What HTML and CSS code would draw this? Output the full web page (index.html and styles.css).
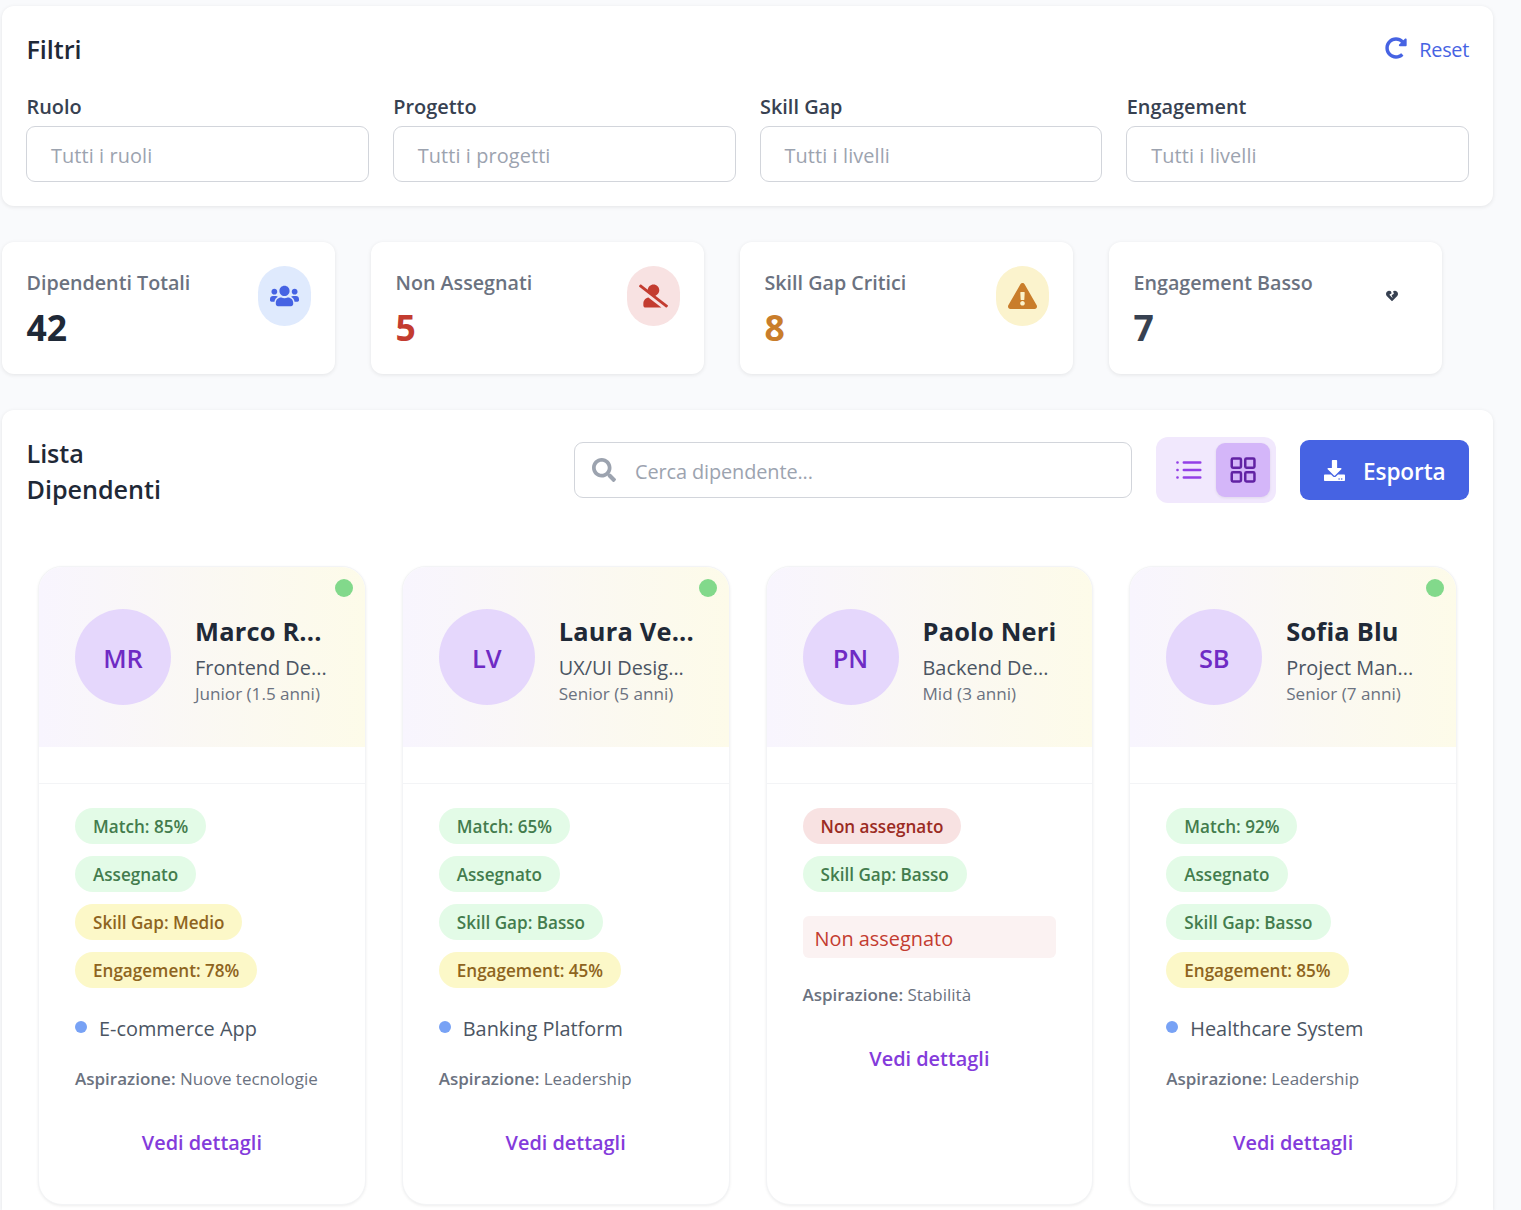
FILE: index.html
```html
<!DOCTYPE html>
<html lang="it">
<head>
<meta charset="utf-8">
<title>Dipendenti</title>
<link rel="stylesheet" href="styles.css">
</head>
<body>
<main class="page">
  <section class="panel filters">
    <div class="filters-head">
      <h2 class="title">Filtri</h2>
      <button class="reset">
        <svg width="22" height="22" viewBox="0 0 512 512" fill="currentColor"><path d="M256.455 8c66.269.119 126.437 26.233 170.859 68.685l35.715-35.715C478.149 25.851 504 36.559 504 57.941V192c0 13.255-10.745 24-24 24H345.941c-21.382 0-32.09-25.851-16.971-40.971l41.75-41.75c-30.864-28.899-70.801-44.907-113.23-45.273-92.398-.798-170.283 73.977-169.484 169.442C88.764 348.009 162.184 424 256 424c41.127 0 79.997-14.678 110.629-41.556 4.743-4.161 11.906-3.908 16.368.553l39.662 39.662c4.872 4.872 4.631 12.815-.482 17.433C378.202 479.813 319.926 504 256 504 119.034 504 8.001 392.967 8 256.002 7.993 119.193 119.646 7.755 256.455 8z"/></svg>
        <span>Reset</span>
      </button>
    </div>
    <div class="filters-grid">
      <div class="field"><span class="label">Ruolo</span><div class="input">Tutti i ruoli</div></div>
      <div class="field"><span class="label">Progetto</span><div class="input">Tutti i progetti</div></div>
      <div class="field"><span class="label">Skill Gap</span><div class="input">Tutti i livelli</div></div>
      <div class="field"><span class="label">Engagement</span><div class="input">Tutti i livelli</div></div>
    </div>
  </section>

  <section class="stats">
    <div class="stat">
      <div><p class="stat-label">Dipendenti Totali</p><p class="stat-value">42</p></div>
      <div class="stat-icon blue"><svg width="29" height="24" viewBox="0 0 640 512" fill="currentColor"><path d="M96 224c35.3 0 64-28.7 64-64s-28.7-64-64-64-64 28.7-64 64 28.7 64 64 64zm448 0c35.3 0 64-28.7 64-64s-28.7-64-64-64-64 28.7-64 64 28.7 64 64 64zm32 32h-64c-17.6 0-33.5 7.1-45.1 18.6 40.3 22.1 68.9 62 75.1 109.4h66c17.7 0 32-14.3 32-32v-32c0-35.3-28.7-64-64-64zm-256 0c61.9 0 112-50.1 112-112S381.9 32 320 32 208 82.1 208 144s50.1 112 112 112zm76.8 32h-8.3c-20.8 10-43.9 16-68.5 16s-47.6-6-68.5-16h-8.3C179.6 288 128 339.6 128 403.2V432c0 26.5 21.5 48 48 48h288c26.5 0 48-21.5 48-48v-28.8c0-63.6-51.6-115.2-115.2-115.2zm-223.7-13.4C161.5 263.1 145.6 256 128 256H64c-35.3 0-64 28.7-64 64v32c0 17.7 14.3 32 32 32h65.9c6.3-47.4 34.9-87.3 75.2-109.4z"/></svg></div>
    </div>
    <div class="stat">
      <div><p class="stat-label">Non Assegnati</p><p class="stat-value red-text">5</p></div>
      <div class="stat-icon red"><svg width="29" height="24" viewBox="0 0 640 512" fill="currentColor"><path d="M633.8 458.1L362.3 248.3C412.1 230.7 448 183.8 448 128 448 57.3 390.7 0 320 0c-67.1 0-121.5 51.8-126.9 117.4L45.5 3.4C38.5-2 28.5-.8 23 6.2L3.4 31.4c-5.4 7-4.2 17 2.8 22.4l588.4 454.7c7 5.4 17 4.2 22.5-2.8l19.6-25.3c5.4-6.8 4.1-16.9-2.9-22.3zM96 422.4V464c0 26.5 21.5 48 48 48h350.2L207.4 290.3C144.2 301.3 96 356 96 422.4z"/></svg></div>
    </div>
    <div class="stat">
      <div><p class="stat-label">Skill Gap Critici</p><p class="stat-value orange-text">8</p></div>
      <div class="stat-icon yellow"><svg width="29" height="26" viewBox="0 0 576 512" fill="currentColor"><path d="M569.517 440.013C587.975 472.007 564.806 512 527.94 512H48.054c-36.937 0-59.999-40.055-41.577-71.987L246.423 23.985c18.467-32.009 64.72-31.951 83.154 0l239.94 416.028zM288 354c-25.405 0-46 20.595-46 46s20.595 46 46 46 46-20.595 46-46-20.595-46-46-46zm-43.673-165.346l7.418 136c.347 6.364 5.609 11.346 11.982 11.346h48.546c6.373 0 11.635-4.982 11.982-11.346l7.418-136c.375-6.874-5.098-12.654-11.982-12.654h-63.383c-6.884 0-12.356 5.78-11.981 12.654z"/></svg></div>
    </div>
    <div class="stat">
      <div><p class="stat-label">Engagement Basso</p><p class="stat-value slate-text">7</p></div>
      <div class="stat-icon plain"><svg width="12" height="12" viewBox="0 0 512 512" fill="currentColor"><path d="M473.7 73.8l-2.4-2.5c-46-47-118-51.7-169.6-14.8L336 159.9l-96 64 48 128-144-144 96-64-28.6-86.5C159.7 19.6 87 24 40.7 71.4l-2.4 2.4C-10.4 123.6-12.5 202.9 31 256l212.1 218.6c7.1 7.3 18.6 7.3 25.7 0L481 255.9c43.5-53 41.4-132.3-7.3-182.1z"/></svg></div>
    </div>
  </section>

  <section class="panel list">
    <div class="list-head">
      <h2 class="title list-title">Lista Dipendenti</h2>
      <div class="search">
        <svg width="24" height="24" viewBox="0 0 512 512" fill="currentColor"><path d="M505 442.7L405.3 343c-4.5-4.5-10.6-7-17-7H372c27.6-35.3 44-79.7 44-128C416 93.1 322.9 0 208 0S0 93.1 0 208s93.1 208 208 208c48.3 0 92.7-16.4 128-44v16.3c0 6.4 2.5 12.5 7 17l99.7 99.7c9.4 9.4 24.6 9.4 33.9 0l28.3-28.3c9.4-9.4 9.4-24.6.1-34zM208 336c-70.7 0-128-57.2-128-128 0-70.7 57.2-128 128-128 70.7 0 128 57.2 128 128 0 70.7-57.2 128-128 128z"/></svg>
        <span>Cerca dipendente...</span>
      </div>
      <div class="toggle">
        <button class="toggle-btn"><svg width="30" height="30" viewBox="0 0 30 30" fill="none" stroke="currentColor" stroke-width="2.5" stroke-linecap="round"><path d="M9.8 7.6H26.3M9.8 15H26.3M9.8 22.5H26.3M3.4 7.6h.2M3.4 15h.2M3.4 22.5h.2"/></svg></button>
        <button class="toggle-btn active"><svg width="30" height="30" viewBox="0 0 30 30" fill="none" stroke="currentColor" stroke-width="2.5"><rect x="3.75" y="3.5" width="9.2" height="9.2" rx="1.2"/><rect x="17.25" y="3.5" width="9.2" height="9.2" rx="1.2"/><rect x="3.75" y="17.25" width="9.2" height="9.2" rx="1.2"/><rect x="17.25" y="17.25" width="9.2" height="9.2" rx="1.2"/></svg></button>
      </div>
      <button class="export">
        <svg width="21" height="21" viewBox="0 0 512 512" fill="currentColor"><path d="M216 0h80c13.3 0 24 10.7 24 24v168h87.7c17.8 0 26.7 21.5 14.1 34.1L269.7 378.3c-7.5 7.5-19.8 7.5-27.3 0L90.1 226.1c-12.6-12.6-3.7-34.1 14.1-34.1H192V24c0-13.3 10.7-24 24-24zm296 376v112c0 13.3-10.7 24-24 24H24c-13.3 0-24-10.7-24-24V376c0-13.3 10.7-24 24-24h146.7l49 49c20.1 20.1 52.5 20.1 72.6 0l49-49H488c13.3 0 24 10.7 24 24zm-124 88c0-11-9-20-20-20s-20 9-20 20 9 20 20 20 20-9 20-20zm64 0c0-11-9-20-20-20s-20 9-20 20 9 20 20 20 20-9 20-20z"/></svg>
        <span>Esporta</span>
      </button>
    </div>

    <div class="cards">
      <article class="card">
        <header class="card-head">
          <span class="status"></span>
          <div class="avatar">MR</div>
          <div class="who"><h3 class="name">Marco R...</h3><p class="role">Frontend De...</p><p class="level">Junior (1.5 anni)</p></div>
        </header>
        <div class="card-body">
          <div class="tags"><span class="tag green">Match: 85%</span><span class="tag green">Assegnato</span><span class="tag amber">Skill Gap: Medio</span><span class="tag amber">Engagement: 78%</span></div>
          <p class="project"><i class="dot"></i><span>E-commerce App</span></p>
          <p class="wish"><b>Aspirazione:</b> Nuove tecnologie</p>
          <a class="details">Vedi dettagli</a>
        </div>
      </article>
      <article class="card">
        <header class="card-head">
          <span class="status"></span>
          <div class="avatar">LV</div>
          <div class="who"><h3 class="name">Laura Ve...</h3><p class="role">UX/UI Desig...</p><p class="level">Senior (5 anni)</p></div>
        </header>
        <div class="card-body">
          <div class="tags"><span class="tag green">Match: 65%</span><span class="tag green">Assegnato</span><span class="tag green">Skill Gap: Basso</span><span class="tag amber">Engagement: 45%</span></div>
          <p class="project"><i class="dot"></i><span>Banking Platform</span></p>
          <p class="wish"><b>Aspirazione:</b> Leadership</p>
          <a class="details">Vedi dettagli</a>
        </div>
      </article>
      <article class="card">
        <header class="card-head">
          <div class="avatar">PN</div>
          <div class="who"><h3 class="name">Paolo Neri</h3><p class="role">Backend De...</p><p class="level">Mid (3 anni)</p></div>
        </header>
        <div class="card-body">
          <div class="tags"><span class="tag rose">Non assegnato</span><span class="tag green">Skill Gap: Basso</span></div>
          <p class="unassigned">Non assegnato</p>
          <p class="wish"><b>Aspirazione:</b> Stabilità</p>
          <a class="details">Vedi dettagli</a>
        </div>
      </article>
      <article class="card">
        <header class="card-head">
          <span class="status"></span>
          <div class="avatar">SB</div>
          <div class="who"><h3 class="name">Sofia Blu</h3><p class="role">Project Man...</p><p class="level">Senior (7 anni)</p></div>
        </header>
        <div class="card-body">
          <div class="tags"><span class="tag green">Match: 92%</span><span class="tag green">Assegnato</span><span class="tag green">Skill Gap: Basso</span><span class="tag amber">Engagement: 85%</span></div>
          <p class="project"><i class="dot"></i><span>Healthcare System</span></p>
          <p class="wish"><b>Aspirazione:</b> Leadership</p>
          <a class="details">Vedi dettagli</a>
        </div>
      </article>
    </div>
  </section>
</main>
</body>
</html>
```
FILE: styles.css
```css
* { box-sizing: border-box; margin: 0; padding: 0; }
body { background: #f9fafc; color: #1f2937; font-family: "Open Sans", "Noto Sans", sans-serif; font-size: 19.9px; line-height: 30px; }
button { font: inherit; border: 0; background: none; }
svg { display: block; flex: none; }
.page { width: 1491px; margin-left: 2px; padding-top: 6px; display: flex; flex-direction: column; gap: 36px; }
.panel { background: #fff; border-radius: 12px; padding: 24px; box-shadow: 0 1px 4px rgba(0,0,0,.09); }
.title { font-size: 25.2px; line-height: 36px; font-weight: 600; padding: 2px 0 0 .5px; letter-spacing: -.05px; }

.filters-head { display: flex; justify-content: space-between; align-items: center; height: 36px; margin-bottom: 24px; }
.reset { display: flex; align-items: center; gap: 12px; color: #4663e3; }
.reset span { padding-top: 3px; letter-spacing: -.3px; }
.filters-grid { display: grid; grid-template-columns: repeat(4, 1fr); gap: 24px; }
.label { display: block; font-weight: 600; color: #374151; line-height: 30px; padding: 2px 0 0 .5px; margin-bottom: 4px; }
.input { height: 56px; border: 1px solid #d2d5db; border-radius: 9px; padding: 14px 24px 0; color: #9ca3af; letter-spacing: .1px; }

.stats { display: grid; grid-template-columns: repeat(4, 333px); gap: 36px; }
.stat { height: 132px; background: #fff; border-radius: 12px; padding: 24px; box-shadow: 0 1px 4px rgba(0,0,0,.09); display: flex; justify-content: space-between; align-items: flex-start; }
.stat-label { color: #6b7280; font-weight: 600; font-size: 19.7px; padding: 2px 0 0 .5px; }
.stat-value { font-size: 35.5px; line-height: 48px; font-weight: 700; padding: 5px 0 0 .5px; }
.stat-icon { width: 53px; height: 60px; border-radius: 27px; display: flex; align-items: center; justify-content: center; }
.blue { background: #dfeafd; color: #4663e3; }
.red { background: #f8e2e2; color: #c33c30; }
.yellow { background: #fbf3cd; color: #c97d2b; }
.plain { color: #374151; }
.red-text { color: #c33c30; }
.orange-text { color: #c97d2b; }
.slate-text { color: #374151; }

.list { height: 800px; padding-bottom: 0; border-radius: 12px 12px 0 0; }
.list-head { display: flex; align-items: center; height: 72px; }
.list-title { width: 150px; margin-right: auto; }
.search { width: 558px; height: 56px; border: 1px solid #d2d5db; border-radius: 9px; padding-left: 17px; display: flex; align-items: center; gap: 19px; color: #9ca3af; }
.search span { padding-top: 3px; letter-spacing: -.1px; }
.toggle { display: flex; margin: 0 24px; width: 120px; height: 66px; padding: 6px; background: #f1e8fd; border-radius: 12px; }
.toggle-btn { width: 54px; height: 54px; border-radius: 9px; display: flex; align-items: center; justify-content: center; color: #9340e6; }
.toggle-btn.active { background: #d4b6f9; color: #6122a4; box-shadow: 0 1px 3px rgba(0,0,0,.08); }
.export { width: 169px; height: 60px; border-radius: 9px; background: #4663e3; color: #fff; font-size: 22.6px; font-weight: 600; display: flex; align-items: center; gap: 18px; padding-left: 24px; }
.export span { padding-top: 3px; letter-spacing: -.1px; }

.cards { display: grid; grid-template-columns: repeat(4, 1fr); gap: 36px; padding: 60px 12px 0; }
.card { height: 639px; background: #fff; border: 1px solid #f3f4f6; border-radius: 24px; overflow: hidden; box-shadow: 0 1px 3px rgba(0,0,0,.07); }
.card-head { position: relative; height: 180px; padding: 0 36px; display: flex; align-items: center; gap: 24px; background: linear-gradient(to right, #f8f5fe, #fdfbe9); }
.status { position: absolute; top: 12px; right: 12px; width: 18px; height: 18px; border-radius: 50%; background: #82d98b; }
.avatar { flex: none; width: 96px; height: 96px; border-radius: 50%; background: #e5d7fc; color: #6f2bc4; font-size: 25.4px; font-weight: 600; display: flex; align-items: center; justify-content: center; padding-top: 2px; }
.who { white-space: nowrap; padding-top: 5px; }
.name { font-size: 25.4px; line-height: 36px; font-weight: 700; letter-spacing: .2px; }
.role { color: #4b5563; line-height: 30px; padding-top: 4px; }
.level { color: #6b7280; font-size: 17.1px; line-height: 24px; margin-top: -1px; }
.card-body { margin-top: 36px; border-top: 1px solid #f3f4f6; padding: 24px 36px; display: flex; flex-direction: column; }
.tags { display: flex; flex-direction: column; align-items: flex-start; gap: 12px; }
.tag { height: 36px; border-radius: 18px; padding: 1px 18px 0; font-size: 17.1px; line-height: 35px; font-weight: 600; }
.green { background: #e3fbe7; color: #437c4d; }
.amber { background: #fcf8c8; color: #8e6420; }
.rose { background: #f8e2e2; color: #9b2b22; }
.project { display: flex; align-items: center; gap: 12px; margin-top: 24px; color: #4b5563; }
.project span { padding-top: 2px; }
.dot { width: 12px; height: 12px; border-radius: 50%; background: #78a2f5; margin-top: -2px; }
.unassigned { margin-top: 24px; height: 42px; border-radius: 6px; padding: 8px 12px 0; background: #fbf2f2; color: #c33c30; }
.wish { margin-top: 23px; font-size: 17px; line-height: 24px; color: #6b7280; white-space: nowrap; }
.unassigned + .wish { margin-top: 25px; }
.wish b { font-weight: 600; }
.details { margin-top: 37px; text-align: center; color: #843bdb; font-weight: 600; }
```
